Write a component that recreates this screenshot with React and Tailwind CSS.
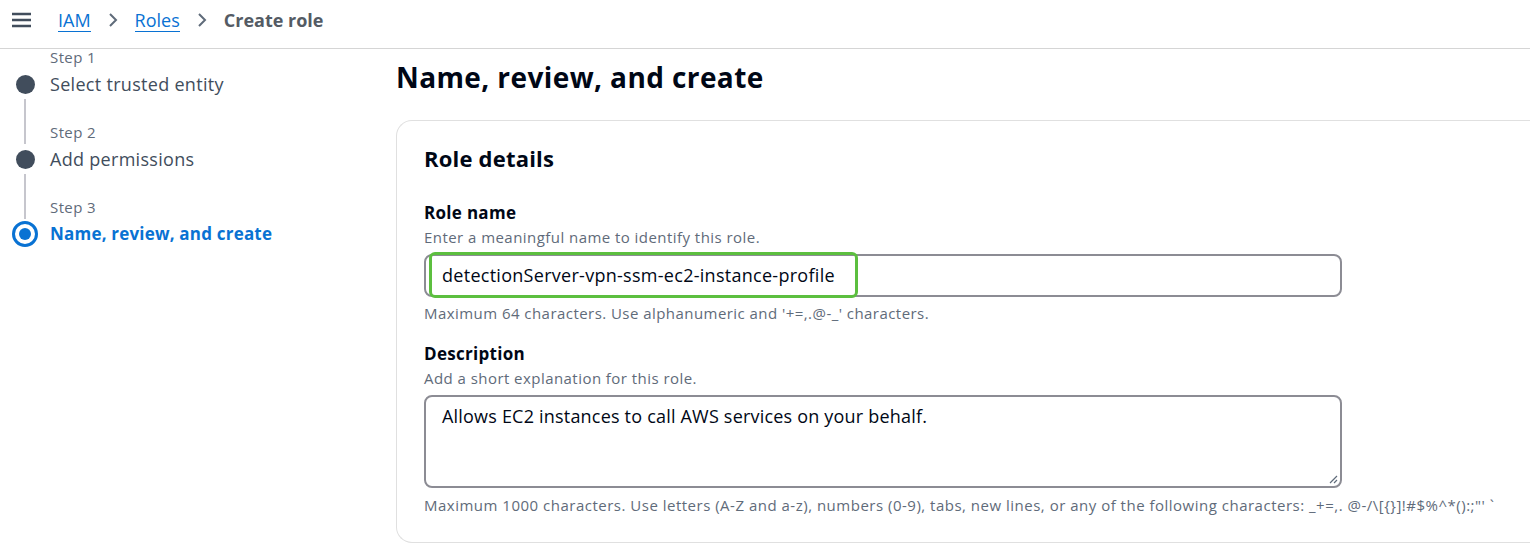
import React from 'react';

const steps = [
  { n: 'Step 1', label: 'Select trusted entity', done: true },
  { n: 'Step 2', label: 'Add permissions', done: true },
  { n: 'Step 3', label: 'Name, review, and create', active: true },
];

function Chevron() {
  return (
    <svg width="12" height="16" viewBox="0 0 12 16" className="mx-[16px]">
      <path d="M3 2l6 6-6 6" fill="none" stroke="#5f6b7a" strokeWidth="2" />
    </svg>
  );
}

export default function App() {
  return (
    <div className="h-[559px] overflow-hidden bg-white text-[#000716]" style={{ fontFamily: '"Open Sans", "Liberation Sans", sans-serif' }}>
      {/* Top breadcrumb bar */}
      <div className="h-[49px] flex items-center border-b border-[#d5d5d5] pl-[12px] pb-[8px]">
        <svg width="19" height="16" viewBox="0 0 19 16" className="mr-[27px]">
          <path d="M0 2h19M0 8h19M0 14h19" stroke="#414d5c" strokeWidth="2.5" />
        </svg>
        <a className="text-[18px] text-[#0972d3] border-b border-[#0972d3] leading-[22px]">IAM</a>
        <Chevron />
        <a className="text-[18px] text-[#0972d3] border-b border-[#0972d3] leading-[22px]">Roles</a>
        <Chevron />
        <span className="text-[18px] font-bold text-[#545b64] leading-[22px]">Create role</span>
      </div>

      <div className="flex">
        {/* Steps nav */}
        <nav className="w-[396px] shrink-0 pl-[12px] -mt-[4px]">
          {steps.map((s, i) => (
            <div key={s.n} className="flex">
              <div className="w-[26px] flex flex-col items-center">
                <div className={`h-[24px] w-[2px] ${i > 0 ? 'bg-[#c6c6cd]' : ''}`} />
                <div className="h-[30px] flex items-center justify-center">
                  {s.active ? (
                    <div className="w-[26px] h-[26px] rounded-full border-[3px] border-[#0972d3] flex items-center justify-center">
                      <div className="w-[12px] h-[12px] rounded-full bg-[#0972d3]" />
                    </div>
                  ) : (
                    <div className="w-[19px] h-[19px] rounded-full bg-[#414d5c]" />
                  )}
                </div>
                {i < steps.length - 1 && <div className="w-[2px] flex-1 bg-[#c6c6cd]" />}
              </div>
              <div className="pl-[12px] pb-[21px]">
                <div className="text-[15px] tracking-[0.4px] text-[#5f6b7a] leading-[24px]">{s.n}</div>
                <div className={`leading-[30px] ${s.active ? 'text-[17px] tracking-[0.2px] font-bold text-[#0972d3]' : 'text-[18px] tracking-[0.3px] text-[#414d5c]'}`}>{s.label}</div>
              </div>
            </div>
          ))}
        </nav>

        {/* Main */}
        <main className="flex-1 pt-[10px]">
          <h1 className="text-[28px] tracking-[0.4px] font-bold leading-[36px] mb-[25px]">Name, review, and create</h1>
          <section className="border border-[#e0e0e0] border-r-0 rounded-l-[16px] pl-[27px] pt-[23px] pb-[27px]">
            <h2 className="text-[22px] tracking-[0.2px] font-bold leading-[28px] mb-[30px]">Role details</h2>

            <label className="block text-[17px] tracking-[0.3px] font-bold leading-[22px]">Role name</label>
            <p className="text-[15px] tracking-[0.45px] text-[#5f6b7a] leading-[24px] mt-[1px] mb-[5px]">Enter a meaningful name to identify this role.</p>
            <div className="relative w-[918px]">
              <div className="h-[43px] border-2 border-[#8c8c94] rounded-[8px] flex items-center pl-[16px] text-[18px] tracking-[0.28px]">
                detectionServer-vpn-ssm-ec2-instance-profile
              </div>
              <div className="absolute left-[5px] top-[-2px] w-[429px] h-[46px] border-[3px] border-[#5cbf3f] rounded-[6px]" />
            </div>
            <p className="text-[15px] tracking-[0.45px] text-[#5f6b7a] leading-[20px] mt-[6px] mb-[20px]">Maximum 64 characters. Use alphanumeric and '+=,.@-_' characters.</p>

            <label className="block text-[17px] tracking-[0.3px] font-bold leading-[22px]">Description</label>
            <p className="text-[15px] tracking-[0.45px] text-[#5f6b7a] leading-[24px] mt-[1px] mb-[5px]">Add a short explanation for this role.</p>
            <div className="relative w-[918px] h-[93px] border-2 border-[#8c8c94] rounded-[8px] pl-[16px] pt-[6px] text-[18px] tracking-[0.2px]">
              Allows EC2 instances to call AWS services on your behalf.
              <svg width="10" height="10" viewBox="0 0 10 10" className="absolute right-[2px] bottom-[2px]">
                <path d="M9 2L2 9M9 6L6 9" stroke="#5f6b7a" strokeWidth="1.2" />
              </svg>
            </div>
            <p className="text-[15px] tracking-[0.5px] text-[#5f6b7a] leading-[20px] mt-[7px] whitespace-nowrap">
              Maximum 1000 characters. Use letters (A-Z and a-z), numbers (0-9), tabs, new lines, or any of the following characters: _+=,. @-/\[{'{}'}]!#$%^*():;"' `
            </p>
          </section>
        </main>
      </div>
    </div>
  );
}
